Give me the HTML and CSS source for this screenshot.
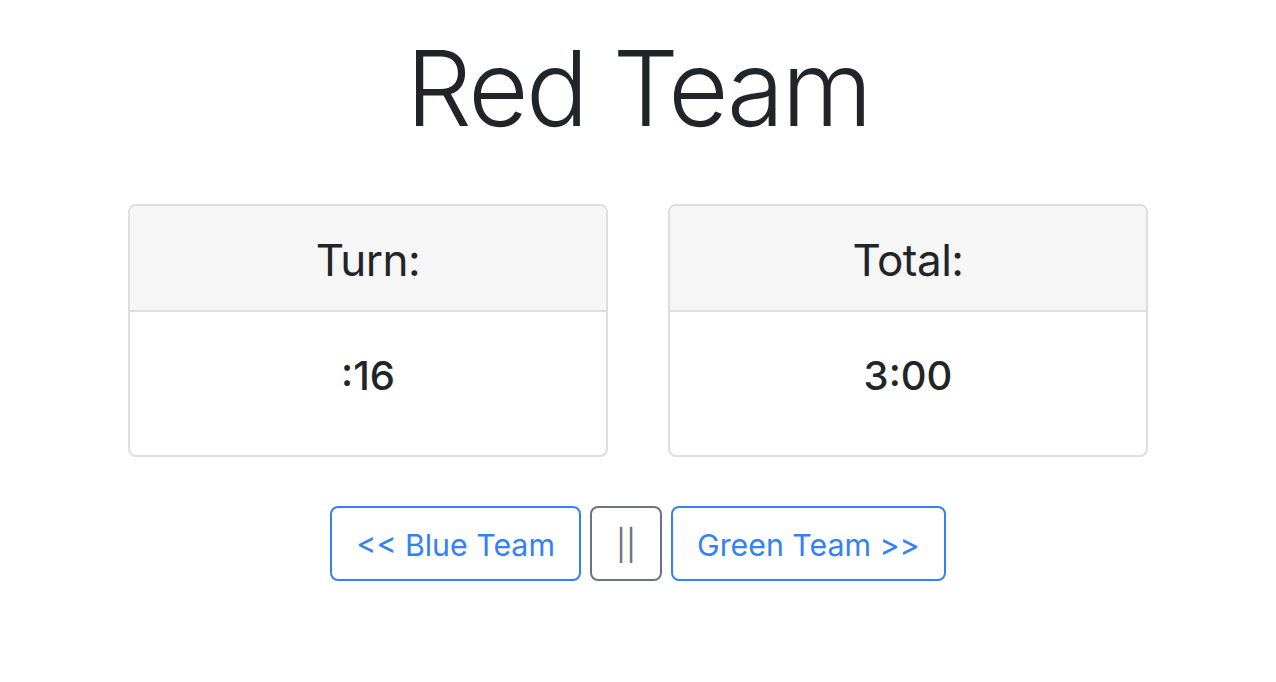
FILE: index.html
```html
<!DOCTYPE html>
<html>
<head>
<meta charset="utf-8">
<link rel="stylesheet" href="styles.css">
</head>
<body>
<div class="page">
  <h1 class="title">Red Team</h1>
  <div class="cards">
    <div class="card">
      <div class="card-header">Turn:</div>
      <div class="card-body"><div class="value">:16</div></div>
    </div>
    <div class="card">
      <div class="card-header">Total:</div>
      <div class="card-body"><div class="value">3:00</div></div>
    </div>
  </div>
  <div class="controls">
    <button class="btn btn-primary">&lt;&lt; Blue Team</button>
    <button class="btn btn-secondary">||</button>
    <button class="btn btn-primary">Green Team &gt;&gt;</button>
  </div>
</div>
</body>
</html>
```
FILE: styles.css
```css
* { box-sizing: border-box; }
html, body { margin: 0; padding: 0; background: #fff; }
body {
  font-family: Inter, "Noto Sans", sans-serif;
  color: #212529;
}
.page {
  display: flex;
  flex-direction: column;
  align-items: center;
  padding-top: 21px;
}
.title {
  margin: 0 0 49px 0;
  font-size: 104px;
  font-weight: 300;
  line-height: 134px;
  letter-spacing: -2.5px;
}
.cards {
  display: flex;
  gap: 60px;
  justify-content: center;
}
.card {
  width: 480px;
  height: 253px;
  border: 2px solid #dedede;
  border-radius: 8px;
  display: flex;
  flex-direction: column;
  overflow: hidden;
}
.card-header {
  height: 106px;
  background: #f6f6f6;
  border-bottom: 2px solid #dedede;
  display: flex;
  align-items: center;
  justify-content: center;
  font-size: 44px;
  font-weight: 400;
  letter-spacing: -0.5px;
  padding-top: 4px;
}
.card-body {
  flex: 1;
  display: flex;
  justify-content: center;
  padding-top: 40px;
}
.value {
  font-size: 40px;
  font-weight: 500;
  line-height: 48px;
}
.controls {
  margin-top: 49px;
  display: flex;
  justify-content: center;
  gap: 9px;
}
.btn {
  font-family: Inter, "Noto Sans", sans-serif;
  font-size: 30.3px;
  line-height: 47px;
  height: 75px;
  padding: 14px 24px 10px;
  background: #fff;
  border: 2px solid;
  border-radius: 8px;
}
.btn-primary { color: #3282f6; border-color: #3282f6; }
.btn-secondary { color: #6c757d; border-color: #6c757d; }
```
